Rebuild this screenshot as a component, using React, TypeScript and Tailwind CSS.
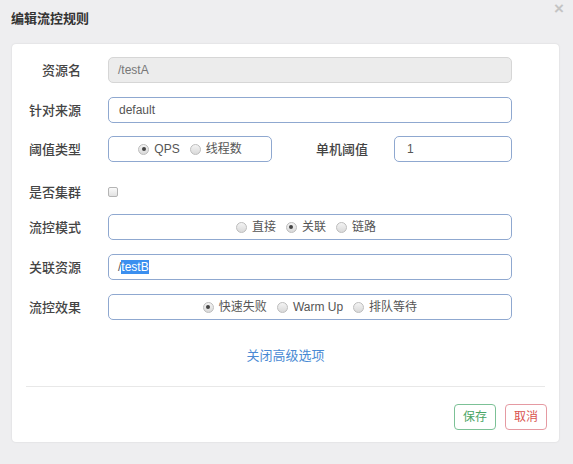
import React from "react";

const FONT = '"Liberation Sans", "Noto Sans CJK SC", sans-serif';

function Radio({ checked, label }: { checked?: boolean; label: string }) {
  return (
    <span className="flex items-center">
      <span className="w-[11px] h-[11px] rounded-full border border-[#bdbdbd] bg-gradient-to-b from-[#f4f4f4] to-[#d9d9d9] flex items-center justify-center">
        {checked && <span className="w-[4px] h-[4px] rounded-full bg-[#444]" />}
      </span>
      <span className="ml-[5px] text-[12px] text-[#555]">{label}</span>
    </span>
  );
}

function Label({ children }: { children: React.ReactNode }) {
  return (
    <div className="w-[69px] shrink-0 text-right text-[13px] font-medium text-[#444] leading-none">
      {children}
    </div>
  );
}

export default function App() {
  return (
    <div
      className="w-[573px] h-[464px] bg-[#eeeef0] flex flex-col overflow-hidden"
      style={{ fontFamily: FONT }}
    >
      <div className="h-[44px] shrink-0 flex items-start justify-between pl-[11px] pr-[9px]">
        <span className="mt-[9px] text-[13px] font-semibold text-[#333]">编辑流控规则</span>
        <span className="text-[#c4c4c4] text-[17px] font-bold leading-none mt-[0px]">×</span>
      </div>

      <div className="ml-[12px] w-[547px] h-[398px] bg-white rounded-[4px] shadow-[0_0_2px_rgba(0,0,0,0.12)] flex flex-col">
        {/* 资源名 */}
        <div className="flex items-center h-[26px] mt-[13px]">
          <Label>资源名</Label>
          <div className="ml-[27px] w-[404px] h-[26px] rounded-[5px] border border-[#d6d6d6] bg-[#ececec] flex items-center pl-[9px] text-[12px] text-[#777]">
            /testA
          </div>
        </div>

        {/* 针对来源 */}
        <div className="flex items-center h-[26px] mt-[14px]">
          <Label>针对来源</Label>
          <div className="ml-[27px] w-[404px] h-[26px] rounded-[5px] border border-[#8fa8d0] bg-white flex items-center pl-[10px] text-[12px] text-[#555]">
            default
          </div>
        </div>

        {/* 阈值类型 */}
        <div className="flex items-center h-[26px] mt-[13px]">
          <Label>阈值类型</Label>
          <div className="ml-[27px] w-[164px] h-[26px] rounded-[5px] border border-[#8fa8d0] bg-white flex items-center justify-center gap-[10px]">
            <Radio checked label="QPS" />
            <Radio label="线程数" />
          </div>
          <div className="ml-[44px] text-[13px] font-medium text-[#444] leading-none">单机阈值</div>
          <div className="ml-[26px] w-[118px] h-[26px] rounded-[5px] border border-[#8fa8d0] bg-white flex items-center pl-[12px] text-[12px] text-[#555]">
            1
          </div>
        </div>

        {/* 是否集群 */}
        <div className="flex items-center h-[26px] mt-[17px]">
          <Label>是否集群</Label>
          <div className="ml-[27px] w-[10px] h-[10px] rounded-[2px] border border-[#b4b4b4] bg-gradient-to-b from-[#fafafa] to-[#e2e2e2]" />
        </div>

        {/* 流控模式 */}
        <div className="flex items-center h-[26px] mt-[9px]">
          <Label>流控模式</Label>
          <div className="ml-[27px] w-[404px] h-[26px] rounded-[5px] border border-[#8fa8d0] bg-white flex items-center justify-center gap-[10px] pr-[8px]">
            <Radio label="直接" />
            <Radio checked label="关联" />
            <Radio label="链路" />
          </div>
        </div>

        {/* 关联资源 */}
        <div className="flex items-center h-[26px] mt-[14px]">
          <Label>关联资源</Label>
          <div className="ml-[27px] w-[404px] h-[26px] rounded-[5px] border border-[#8fa8d0] bg-white flex items-center pl-[9px] text-[12px] text-[#555]">
            <span>/</span>
            <span className="bg-[#3b8fef] text-white leading-[14px]">testB</span>
          </div>
        </div>

        {/* 流控效果 */}
        <div className="flex items-center h-[26px] mt-[14px]">
          <Label>流控效果</Label>
          <div className="ml-[27px] w-[404px] h-[26px] rounded-[5px] border border-[#8fa8d0] bg-white flex items-center justify-center gap-[10px]">
            <Radio checked label="快速失败" />
            <Radio label="Warm Up" />
            <Radio label="排队等待" />
          </div>
        </div>

        <div className="mt-[28px] flex justify-center">
          <span className="text-[13px] text-[#4a8ad4] leading-[16px]">关闭高级选项</span>
        </div>

        <div className="mt-[22px] mx-[14px] h-px bg-[#e8e8e8]" />

        <div className="mt-[17px] flex justify-end gap-[9px] pr-[12px]">
          <div className="w-[42px] h-[26px] rounded-[4px] border border-[#7cc196] text-[#4aa566] text-[12px] flex items-center justify-center">
            保存
          </div>
          <div className="w-[42px] h-[26px] rounded-[4px] border border-[#e59aa2] text-[#d9534f] text-[12px] flex items-center justify-center">
            取消
          </div>
        </div>
      </div>
    </div>
  );
}
